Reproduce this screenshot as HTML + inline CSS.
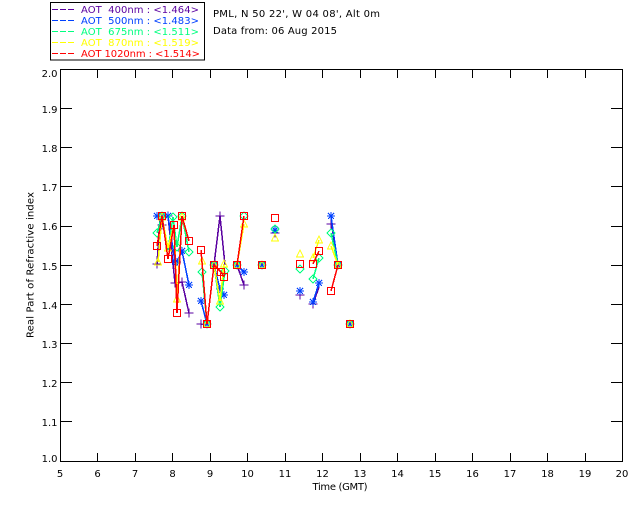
<!DOCTYPE html>
<html><head><meta charset="utf-8"><style>
html,body{margin:0;padding:0;background:#fff}
svg{display:block}
text{font-family:"DejaVu Sans",sans-serif;font-size:10px;fill:#000}
.f{fill:none;stroke-width:1;shape-rendering:crispEdges}
.c path{shape-rendering:crispEdges}
</style></head><body>
<svg width="640" height="512" viewBox="0 0 640 512" xmlns="http://www.w3.org/2000/svg">
<defs>
<path id="p" d="M-4.5 0H4.5M0 -4.5V4.5" fill="none" stroke-width="1" shape-rendering="crispEdges"/>
<path id="s" d="M-4 0H4M0 -4V4M-3 -3L3 3M-3 3L3 -3" fill="none" stroke-width="1.1" shape-rendering="crispEdges"/>
<path id="d" d="M0 -4L4 0L0 4L-4 0Z" fill="none" stroke-width="1" shape-rendering="crispEdges"/>
<path id="t" d="M0 -4L3.5 3H-3.5Z" fill="none" stroke-width="1" shape-rendering="crispEdges"/>
</defs>
<!-- legend -->
<rect x="50.5" y="2.5" width="154" height="57.5" class="f" stroke="#000"/>
<g stroke-width="1" shape-rendering="crispEdges" stroke-dasharray="6 2">
<path d="M52 9.5H75" stroke="#5a00a0"/>
<path d="M52 20.5H75" stroke="#0040ff"/>
<path d="M52 31.5H75" stroke="#00ff80"/>
<path d="M52 42.5H75" stroke="#ffff00"/>
<path d="M52 53.5H75" stroke="#ff0000"/>
</g>
<g>
<text x="81" y="13" textLength="118" lengthAdjust="spacing" style="fill:#5a00a0" xml:space="preserve">AOT  400nm : &lt;1.464&gt;</text>
<text x="81" y="24" textLength="118" lengthAdjust="spacing" style="fill:#0040ff" xml:space="preserve">AOT  500nm : &lt;1.483&gt;</text>
<text x="81" y="35" textLength="118" lengthAdjust="spacing" style="fill:#00ff80" xml:space="preserve">AOT  675nm : &lt;1.511&gt;</text>
<text x="81" y="46" textLength="118" lengthAdjust="spacing" style="fill:#ffff00" xml:space="preserve">AOT  870nm : &lt;1.519&gt;</text>
<text x="81" y="57" textLength="119" lengthAdjust="spacing" style="fill:#ff0000" xml:space="preserve">AOT 1020nm : &lt;1.514&gt;</text>
</g>
<text x="213" y="17" textLength="167" lengthAdjust="spacing">PML, N 50 22', W 04 08', Alt 0m</text>
<text x="213" y="34" textLength="124" lengthAdjust="spacing">Data from: 06 Aug 2015</text>
<!-- frame -->
<rect x="60.5" y="69.5" width="562" height="392" class="f" stroke="#000"/>
<path class="f" stroke="#000" d="M97.5 70V78M135.5 70V78M172.5 70V78M210.5 70V78M247.5 70V78M285.5 70V78M322.5 70V78M360.5 70V78M397.5 70V78M435.5 70V78M472.5 70V78M510.5 70V78M547.5 70V78M585.5 70V78
M97.5 461V453M135.5 461V453M172.5 461V453M210.5 461V453M247.5 461V453M285.5 461V453M322.5 461V453M360.5 461V453M397.5 461V453M435.5 461V453M472.5 461V453M510.5 461V453M547.5 461V453M585.5 461V453
M61 108.5H72M61 147.5H72M61 186.5H72M61 226.5H72M61 265.5H72M61 304.5H72M61 343.5H72M61 382.5H72M61 421.5H72
M622 108.5H611M622 147.5H611M622 186.5H611M622 226.5H611M622 265.5H611M622 304.5H611M622 343.5H611M622 382.5H611M622 421.5H611"/>
<!-- y labels -->
<g text-anchor="end">
<text x="57.5" y="77">2.0</text><text x="57.5" y="113">1.9</text><text x="57.5" y="152">1.8</text><text x="57.5" y="191">1.7</text><text x="57.5" y="230">1.6</text><text x="57.5" y="270">1.5</text><text x="57.5" y="309">1.4</text><text x="57.5" y="348">1.3</text><text x="57.5" y="387">1.2</text><text x="57.5" y="426">1.1</text><text x="57.5" y="462">1.0</text>
</g>
<g text-anchor="middle">
<text x="60" y="477">5</text><text x="97.5" y="477">6</text><text x="135" y="477">7</text><text x="172.5" y="477">8</text><text x="210" y="477">9</text><text x="247.5" y="477">10</text><text x="285" y="477">11</text><text x="322.5" y="477">12</text><text x="360" y="477">13</text><text x="397.5" y="477">14</text><text x="435" y="477">15</text><text x="472.5" y="477">16</text><text x="510" y="477">17</text><text x="547.5" y="477">18</text><text x="585" y="477">19</text><text x="622" y="477">20</text>
</g>
<text x="312.5" y="490" textLength="55" lengthAdjust="spacing">Time (GMT)</text>
<text transform="translate(33.5 338) rotate(-90)" textLength="146" lengthAdjust="spacing">Real Part of Refractive index</text>
<!-- purple -->
<g class="c" stroke="#5a00a0" fill="none" stroke-width="1.5">
<path d="M157 264L160 216L168 216L175 283L182 282L189 313M201 324L207 324L214 265L220 216L225 265M237 265L244 285M313 304L319 287M331 221L338 265"/>
<use href="#p" x="157" y="264"/><use href="#p" x="162" y="225"/><use href="#p" x="168" y="216"/><use href="#p" x="175" y="283"/><use href="#p" x="182" y="282"/><use href="#p" x="189" y="313"/><use href="#p" x="201" y="324"/><use href="#p" x="220" y="216"/><use href="#p" x="244" y="285"/><use href="#p" x="275" y="233"/><use href="#p" x="300" y="295"/><use href="#p" x="313" y="304"/><use href="#p" x="331" y="224"/>
</g>
<!-- blue -->
<g class="c" stroke="#0040ff" fill="none" stroke-width="1.5">
<path d="M157 216L163 216L168 216L175 262L177 262L182 251L189 285M201 301L207 324L214 265L220 289L224 295M237 265L244 272M313 302L319 283M331 216L338 265"/>
<use href="#s" x="157" y="216"/><use href="#s" x="163" y="216"/><use href="#s" x="168" y="216"/><use href="#s" x="175" y="262"/><use href="#s" x="177" y="262"/><use href="#s" x="182" y="251"/><use href="#s" x="189" y="285"/><use href="#s" x="201" y="301"/><use href="#s" x="207" y="324"/><use href="#s" x="214" y="265"/><use href="#s" x="220" y="289"/><use href="#s" x="224" y="295"/><use href="#s" x="237" y="265"/><use href="#s" x="244" y="272"/><use href="#s" x="262" y="265"/><use href="#s" x="275" y="230"/><use href="#s" x="300" y="291"/><use href="#s" x="313" y="302"/><use href="#s" x="319" y="283"/><use href="#s" x="331" y="216"/><use href="#s" x="338" y="265"/><use href="#s" x="350" y="324"/>
</g>
<!-- green -->
<g class="c" stroke="#00ff80" fill="none" stroke-width="1.5">
<path d="M157 233L162 216L168 250L173 217L177 247L182 216L189 252M202 272L207 324L214 265L220 307L225 271M237 265L244 216M313 279L319 258M331 233L338 265"/>
<use href="#d" x="157" y="233"/><use href="#d" x="162" y="216"/><use href="#d" x="173" y="217"/><use href="#d" x="177" y="247"/><use href="#d" x="182" y="216"/><use href="#d" x="189" y="252"/><use href="#d" x="202" y="272"/><use href="#d" x="207" y="324"/><use href="#d" x="214" y="265"/><use href="#d" x="220" y="307"/><use href="#d" x="225" y="271"/><use href="#d" x="237" y="265"/><use href="#d" x="244" y="216"/><use href="#d" x="262" y="265"/><use href="#d" x="275" y="229"/><use href="#d" x="300" y="269"/><use href="#d" x="313" y="279"/><use href="#d" x="319" y="258"/><use href="#d" x="331" y="233"/><use href="#d" x="338" y="265"/><use href="#d" x="350" y="324"/>
</g>
<!-- yellow -->
<g class="c" stroke="#ffff00" fill="none" stroke-width="1.5">
<path d="M158 262L162 217L168 248L174 225L177 299L182 217L189 241M202 261L207 324L214 265L220 301L224 264M237 265L244 224M313 258L319 240M331 246L338 265"/>
<use href="#t" x="158" y="262"/><use href="#t" x="162" y="217"/><use href="#t" x="168" y="248"/><use href="#t" x="177" y="299"/><use href="#t" x="182" y="217"/><use href="#t" x="202" y="261"/><use href="#t" x="207" y="324"/><use href="#t" x="214" y="265"/><use href="#t" x="220" y="301"/><use href="#t" x="224" y="264"/><use href="#t" x="237" y="265"/><use href="#t" x="244" y="224"/><use href="#t" x="262" y="265"/><use href="#t" x="275" y="238"/><use href="#t" x="300" y="254"/><use href="#t" x="313" y="258"/><use href="#t" x="319" y="240"/><use href="#t" x="331" y="246"/><use href="#t" x="338" y="265"/><use href="#t" x="350" y="324"/>
</g>
<!-- red -->
<g class="c" stroke="#ff0000" fill="none" stroke-width="1.5">
<path d="M157 246L162 216L168 259L174 225L177 313L182 216L189 241M201 250L207 324L214 265L221 272L224 277M237 265L244 216M313 264L319 251M331 291L338 265"/>
<rect x="153.5" y="242.5" width="7" height="7" class="f" stroke="#ff0000"/>
<rect x="158.5" y="212.5" width="7" height="7" class="f" stroke="#ff0000"/>
<rect x="164.5" y="255.5" width="7" height="7" class="f" stroke="#ff0000"/>
<rect x="170.5" y="221.5" width="7" height="7" class="f" stroke="#ff0000"/>
<rect x="173.5" y="309.5" width="7" height="7" class="f" stroke="#ff0000"/>
<rect x="178.5" y="212.5" width="7" height="7" class="f" stroke="#ff0000"/>
<rect x="185.5" y="237.5" width="7" height="7" class="f" stroke="#ff0000"/>
<rect x="197.5" y="246.5" width="7" height="7" class="f" stroke="#ff0000"/>
<rect x="203.5" y="320.5" width="7" height="7" class="f" stroke="#ff0000"/>
<rect x="210.5" y="261.5" width="7" height="7" class="f" stroke="#ff0000"/>
<rect x="217.5" y="268.5" width="7" height="7" class="f" stroke="#ff0000"/>
<rect x="220.5" y="273.5" width="7" height="7" class="f" stroke="#ff0000"/>
<rect x="233.5" y="261.5" width="7" height="7" class="f" stroke="#ff0000"/>
<rect x="240.5" y="212.5" width="7" height="7" class="f" stroke="#ff0000"/>
<rect x="258.5" y="261.5" width="7" height="7" class="f" stroke="#ff0000"/>
<rect x="271.5" y="214.5" width="7" height="7" class="f" stroke="#ff0000"/>
<rect x="296.5" y="260.5" width="7" height="7" class="f" stroke="#ff0000"/>
<rect x="309.5" y="260.5" width="7" height="7" class="f" stroke="#ff0000"/>
<rect x="315.5" y="247.5" width="7" height="7" class="f" stroke="#ff0000"/>
<rect x="327.5" y="287.5" width="7" height="7" class="f" stroke="#ff0000"/>
<rect x="334.5" y="261.5" width="7" height="7" class="f" stroke="#ff0000"/>
<rect x="346.5" y="320.5" width="7" height="7" class="f" stroke="#ff0000"/>
</g>
</svg>
</body></html>
